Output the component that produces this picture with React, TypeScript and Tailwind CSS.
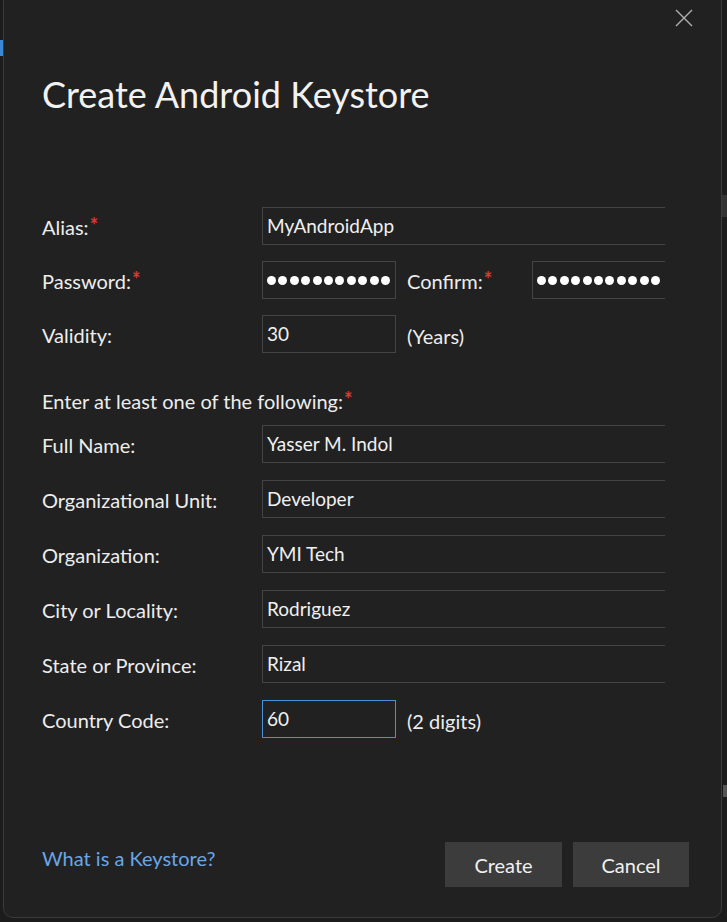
const font = { fontFamily: '"Segoe UI", Lato, "Liberation Sans", sans-serif' };

function Req() {
  return <span className="text-[#e5343a] text-[20px] font-bold relative -top-[2px] ml-[1px]">*</span>;
}

function Field({ value, open = true, w = "w-[403px]", focus = false }: { value: string; open?: boolean; w?: string; focus?: boolean }) {
  return (
    <div
      className={`${w} h-[38px] flex items-center pl-[4px] text-[19px] text-[#f0f0f0] ${
        focus ? "border border-[#4b8fd6]" : open ? "border border-r-0 border-[#444444]" : "border border-[#444444]"
      }`}
    >
      {value}
    </div>
  );
}

function Dots() {
  return (
    <div className="flex items-center gap-[2.4px]">
      {Array.from({ length: 11 }).map((_, i) => (
        <span key={i} className="w-[9px] h-[9px] rounded-full bg-white" />
      ))}
    </div>
  );
}

function Row({ label, req = false, children }: { label: string; req?: boolean; children: React.ReactNode }) {
  return (
    <div className="flex items-center h-[38px]">
      <div className="w-[220px] text-[20px] text-[#ededed] pt-[2px]">
        {label}
        {req && <Req />}
      </div>
      {children}
    </div>
  );
}

export default function App() {
  return (
    <div className="w-[727px] h-[922px] bg-[#1c1c1c] relative overflow-hidden" style={font}>
      {/* fragments of the window behind */}
      <div className="absolute left-0 top-[40px] w-[3px] h-[16px] bg-[#3a8ad6]" />
      <div className="absolute right-0 top-[195px] w-[5px] h-[22px] bg-[#333333]" />
      <div className="absolute right-0 top-[785px] w-[4px] h-[12px] bg-[#555555]" />

      <div className="absolute left-[3px] top-[-8px] w-[719px] h-[926px] bg-[#212121] border border-[#3a3a3a] rounded-[10px] flex flex-col pl-[38px]">
        <button className="absolute right-[28px] top-[16px] text-[#b0b0b0]">
          <svg width="18" height="18" viewBox="0 0 18 18" fill="none" stroke="currentColor" strokeWidth="1.4">
            <path d="M1 1L17 17M17 1L1 17" />
          </svg>
        </button>

        <h1 className="mt-[79px] text-[36px] leading-[44px] text-[#f2f2f2] font-normal">Create Android Keystore</h1>

        <div className="mt-[91px] flex flex-col gap-[16px]">
          <Row label="Alias:" req>
            <Field value="MyAndroidApp" />
          </Row>
          <Row label="Password:" req>
            <div className="w-[134px] h-[38px] border border-[#444444] flex items-center pl-[4px]">
              <Dots />
            </div>
            <div className="w-[136px] pl-[11px] text-[20px] text-[#ededed] pt-[2px]">
              Confirm:
              <Req />
            </div>
            <div className="w-[133px] h-[38px] border border-r-0 border-[#444444] flex items-center pl-[4px]">
              <Dots />
            </div>
          </Row>
          <Row label="Validity:">
            <Field value="30" open={false} w="w-[134px]" />
            <span className="pl-[11px] text-[20px] text-[#ededed] pt-[4px]">(Years)</span>
          </Row>
        </div>

        <div className="mt-[33px] h-[26px] text-[20px] text-[#ededed]">
          Enter at least one of the following:
          <Req />
        </div>

        <div className="mt-[13px] flex flex-col gap-[17px]">
          <Row label="Full Name:">
            <Field value="Yasser M. Indol" />
          </Row>
          <Row label="Organizational Unit:">
            <Field value="Developer" />
          </Row>
          <Row label="Organization:">
            <Field value="YMI Tech" />
          </Row>
          <Row label="City or Locality:">
            <Field value="Rodriguez" />
          </Row>
          <Row label="State or Province:">
            <Field value="Rizal" />
          </Row>
          <Row label="Country Code:">
            <Field value="60" focus w="w-[134px]" />
            <span className="pl-[11px] text-[20px] text-[#ededed] pt-[4px]">(2 digits)</span>
          </Row>
        </div>

        <div className="mt-[104px] flex items-start pr-[32px]">
          <a className="mt-[1px] text-[20px] text-[#6aa7e6] flex-1">What is a Keystore?</a>
          <button className="w-[117px] h-[45px] bg-[#3c3c3c] text-[20px] text-[#f0f0f0]">Create</button>
          <button className="ml-[11px] w-[116px] h-[45px] bg-[#3c3c3c] text-[20px] text-[#f0f0f0]">Cancel</button>
        </div>
      </div>
    </div>
  );
}
